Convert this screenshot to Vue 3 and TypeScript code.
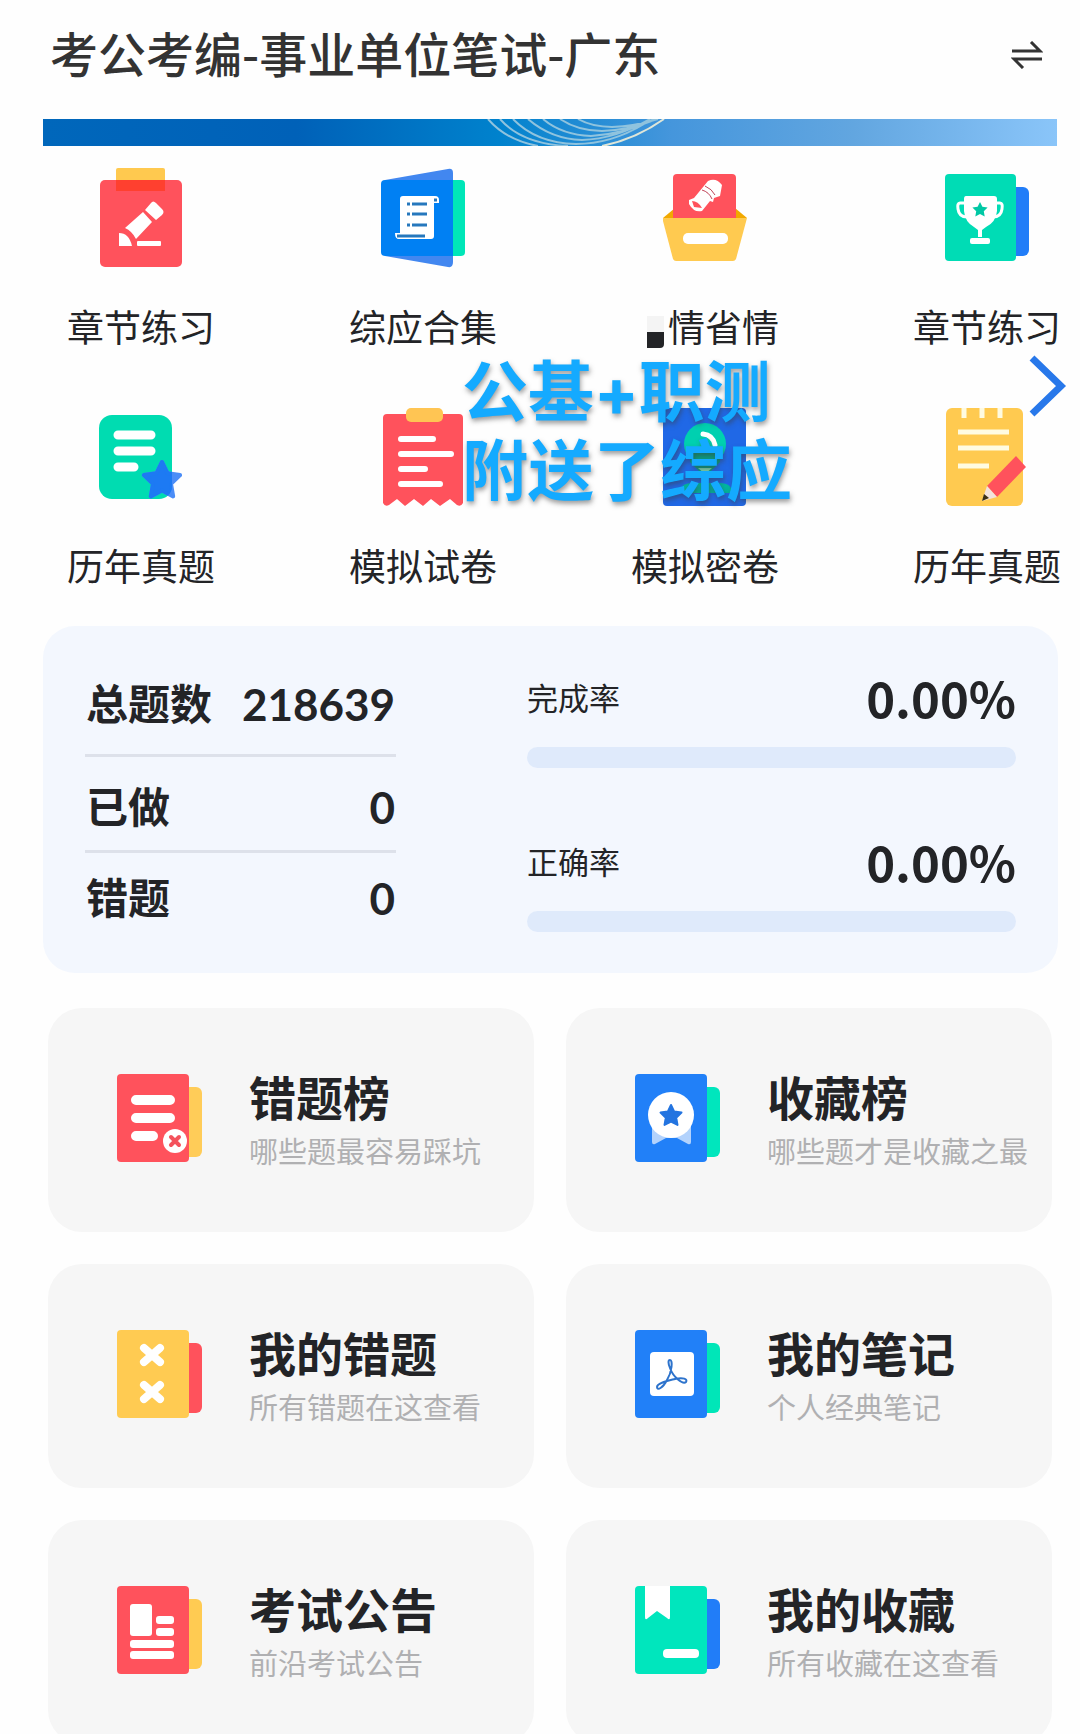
<script setup lang="ts">
interface Entry {
  label: string
  art: string
  masked?: boolean
}

interface Tile {
  title: string
  note: string
  art: string
}

const star = (cx: number, cy: number, r: number): string =>
  Array.from({ length: 10 }, (_, i) => {
    const radius = i % 2 ? r * 0.5 : r
    const a = -Math.PI / 2 + (i * Math.PI) / 5
    return `${(cx + radius * Math.cos(a)).toFixed(1)},${(cy + radius * Math.sin(a)).toFixed(1)}`
  }).join(' ')

// A cover sheet with a second, shorter sheet showing behind its right edge
const book = (front: string, back: string): string =>
  `<rect x="50" y="13" width="35" height="70" rx="6" fill="${back}"/><rect width="72" height="88" rx="4" fill="${front}"/>`

const entries: Entry[] = [
  {
    label: '章节练习',
    art: `<rect x="25" y="3" width="49" height="24" rx="2" fill="#ffc94f"/>
      <rect x="9" y="15" width="82" height="87" rx="5" fill="#ff525c"/>
      <path d="M25 15H74V26H25Z" fill="#ff402f"/>
      <path d="M54 45 60 38Q62 35 65 38L71 44Q74 47 71 50L65 55Z" fill="#fff"/>
      <path d="M52 47 61 57 45 74Q41 66 34 63Z" fill="#fff"/>
      <path d="M28 81V68Q38 68 41 81Z" fill="#fff"/>
      <rect x="46" y="76" width="24" height="5" rx="1" fill="#fff"/>`,
  },
  {
    label: '综应合集',
    art: `<rect x="60" y="15" width="32" height="76" rx="4" fill="#00e6b8"/>
      <path d="M12 15 75 4Q80 3 80 8V97Q80 103 75 102L12 91Z" fill="#4287f0"/>
      <path d="M12 15H80V91H12Q8 91 8 87V19Q8 15 12 15Z" fill="#0080f3"/>
      <path d="M30 31H62Q66 31 66 35V38H61V71Q61 74 58 74H26Q22 74 22 68H27V34Q27 31 30 31Z" fill="#fff"/>
      <path d="M39 39H54M39 49H54M39 60H54M34 39H37M34 49H37M34 60H37" stroke="#2678bd" stroke-width="3"/>
      <path d="M24 71H52M61 35H64" stroke="#2678bd" stroke-width="3"/>`,
  },
  {
    label: '情省情',
    masked: true,
    art: `<path d="M8 53 20 43H80L92 53Z" fill="#f2a900"/>
      <rect x="18" y="9" width="63" height="50" rx="4" fill="#ff525c"/>
      <path d="M8 53H92L81 94Q80 96 78 96H21Q19 96 18 94L8 56Z" fill="#ffca50"/>
      <rect x="28" y="68" width="45" height="11" rx="5" fill="#fff"/>
      <path d="M34 35 39 33 53 16Q61 12 67 20L65 31 59 33 58 37 55 36 47 46Q39 48 34 39Z" fill="#fff"/>
      <path d="M47 25Q54 27 57 34M50 21Q57 24 60 30" fill="none" stroke="#c1465a" stroke-width="1"/>
      <path d="M37 36Q43 36 47 43L39 42Z" fill="#ff525c"/>`,
  },
  {
    label: '章节练习',
    art: `<rect x="60" y="22" width="32" height="69" rx="6" fill="#217df8"/>
      <rect x="8" y="9" width="71" height="87" rx="4" fill="#00dcb5"/>
      <path d="M28 38H23Q20 38 21 44 22 52 30 52M58 38H63Q66 38 65 44 64 52 56 52" fill="none" stroke="#fff" stroke-width="3"/>
      <path d="M29 31H57Q60 31 60 34V46Q59 57 49 62L45 65V72H41V65L37 62Q28 57 27 46V34Q27 31 29 31Z" fill="#fff"/>
      <rect x="33" y="73" width="20" height="6" rx="2" fill="#fff"/>
      <polygon points="${star(43, 45, 8)}" fill="#00c8a5"/>`,
  },
  {
    label: '历年真题',
    art: `<rect x="8" y="11" width="73" height="84" rx="13" fill="#00dcb1"/>
      <path d="M27 31H60M27 47H60M27 63H43" stroke="#fff" stroke-width="9" stroke-linecap="round"/>
      <polygon points="${star(71, 77, 19)}" fill="#4b8df7" stroke="#4b8df7" stroke-width="4" stroke-linejoin="round"/>
      <clipPath id="star-on-sheet"><rect x="8" y="11" width="73" height="84" rx="13"/></clipPath>
      <polygon clip-path="url(#star-on-sheet)" points="${star(71, 77, 19)}" fill="#1d7af3" stroke="#1d7af3" stroke-width="4" stroke-linejoin="round"/>`,
  },
  {
    label: '模拟试卷',
    art: `<path d="M14 10H86Q90 10 90 14V99Q88 103 84 101L77 95 67 102 58 95 50 102 41 95 32 102 24 95 16 101Q12 103 10 99V14Q10 10 14 10Z" fill="#ff525c"/>
      <rect x="33" y="4" width="37" height="14" rx="5" fill="#ffc553"/>
      <path d="M28 35H60M28 50H78M28 65H52M28 80H67" stroke="#fff" stroke-width="6" stroke-linecap="round"/>`,
  },
  {
    label: '模拟密卷',
    art: `<rect x="8" y="4" width="83" height="98" rx="4" fill="#2068e6"/>
      <path d="M25 89Q25 79 37 79H65Q77 79 77 89Z" fill="#00b7a0"/>
      <circle cx="50" cy="40" r="21" fill="#00d0b0"/>
      <path d="M35 49H65V58L55 68H45L35 58Z" fill="#06a084"/>
      <path d="M43 64H57L50 70Z" fill="#7dd7b2"/>
      <path d="M48 30Q58 31 60 41" fill="none" stroke="#fff" stroke-width="5" stroke-linecap="round"/>`,
  },
  {
    label: '历年真题',
    art: `<rect x="9" y="4" width="77" height="98" rx="6" fill="#ffca50"/>
      <path d="M27 4V14M45 4V14M63 4V14M21 28H72M21 44H72M21 62H52" stroke="#fffbe0" stroke-width="5"/>
      <path d="M79 52 89 63 60 93 50 82Z" fill="#ff525c"/>
      <path d="M50 82 60 93 45 97Z" fill="#f3e3dc"/>
      <path d="M47 90 52 94 45 97Z" fill="#3c3015"/>`,
  },
]

const tiles: Tile[] = [
  {
    title: '错题榜',
    note: '哪些题最容易踩坑',
    art: `${book('#ff525c', '#ffcc58')}
      <path d="M19 26H53M19 44H53M19 62H36" stroke="#fff" stroke-width="10" stroke-linecap="round"/>
      <circle cx="58" cy="67" r="12" fill="#fff"/>
      <path d="M54 63 62 71M62 63 54 71" stroke="#f4525c" stroke-width="4" stroke-linecap="round"/>`,
  },
  {
    title: '收藏榜',
    note: '哪些题才是收藏之最',
    art: `${book('#2180f8', '#00e6bd')}
      <path d="M17 52H56V68Q56 71 53 70L42 64H31L20 70Q17 71 17 68Z" fill="#b2d2fc"/>
      <circle cx="36" cy="41" r="23" fill="#fff"/>
      <polygon points="${star(36, 42, 11)}" fill="#2374e0" stroke="#2374e0" stroke-width="2" stroke-linejoin="round"/>`,
  },
  {
    title: '我的错题',
    note: '所有错题在这查看',
    art: `${book('#ffcb52', '#ff525c')}
      <path d="M27 18 43 32M43 18 27 32M27 55 43 69M43 55 27 69" stroke="#fff" stroke-width="8" stroke-linecap="round"/>`,
  },
  {
    title: '我的笔记',
    note: '个人经典笔记',
    art: `${book('#2180f8', '#00e6b8')}
      <rect x="15" y="22" width="44" height="44" rx="4" fill="#fff"/>
      <path d="M35 30C38 30 37 42 32 50 28 58 22 61 22 57 22 53 32 51 40 49 48 47 53 49 51 52 48 55 38 47 35 38 33 33 33 30 35 30Z" fill="none" stroke="#2d73cc" stroke-width="2"/>`,
  },
  {
    title: '考试公告',
    note: '前沿考试公告',
    art: `${book('#ff525c', '#ffcb52')}
      <g fill="#fff"><rect x="13" y="18" width="22" height="32" rx="3"/><rect x="39" y="30" width="18" height="8" rx="3"/>
      <rect x="39" y="42" width="18" height="8" rx="3"/><rect x="13" y="54" width="44" height="8" rx="3"/><rect x="13" y="65" width="44" height="8" rx="3"/></g>`,
  },
  {
    title: '我的收藏',
    note: '所有收藏在这查看',
    art: `${book('#00e6bd', '#217df8')}
      <path d="M10 0H35V31Q35 35 32 32L22 25 13 32Q10 35 10 31Z" fill="#fff"/>
      <rect x="28" y="63" width="36" height="9" rx="4" fill="#fff"/>`,
  },
]

const totals = [
  { name: '总题数', value: '218639' },
  { name: '已做', value: '0' },
  { name: '错题', value: '0' },
]

const rates = [
  { id: 'rate-done', name: '完成率', value: 0 },
  { id: 'rate-right', name: '正确率', value: 0 },
]
</script>

<template>
  <main class="page">
    <header class="top">
      <h1>考公考编-事业单位笔试-广东</h1>
      <button class="swap" type="button" aria-label="切换">
        <svg width="32" height="28" viewBox="0 0 32 28" fill="none" stroke="#333" stroke-width="3">
          <path d="M1 10H29L20 1M31 18H3L12 27" />
        </svg>
      </button>
    </header>

    <div class="banner">
      <svg width="190" height="27" viewBox="0 0 190 27" fill="none" stroke-width="2">
        <g stroke="#8fc3de">
          <path d="M2 0Q20 21 52 27M14 0Q36 25 82 27M27 0Q50 24 90 25 125 25 158 5M42 0Q65 20 96 21 130 20 164 0M57 0Q76 16 105 17 138 15 168 0M74 0Q92 12 116 12 144 11 171 0M92 0Q106 8 126 8 150 7 172 0" />
        </g>
        <path d="M116 27Q150 20 178 0" stroke="#dfe6d8" />
      </svg>
    </div>

    <section class="entries">
      <button v-for="(entry, i) in entries" :key="i" type="button" class="entry">
        <svg width="100" height="110" viewBox="0 0 100 110" aria-hidden="true" v-html="entry.art" />
        <span class="entry-label"><i v-if="entry.masked" class="mask"></i>{{ entry.label }}</span>
      </button>
      <p class="promo">公基+职测<br />附送了综应</p>
      <button class="next" type="button" aria-label="下一页">
        <svg width="38" height="64" viewBox="0 0 38 64" fill="none" stroke="#2878ea" stroke-width="7">
          <path d="M3 4 32 32 3 60" />
        </svg>
      </button>
    </section>

    <section class="stats">
      <dl class="totals">
        <div v-for="row in totals" :key="row.name" class="total">
          <dt>{{ row.name }}</dt>
          <dd>{{ row.value }}</dd>
        </div>
      </dl>
      <div class="rates">
        <div v-for="rate in rates" :key="rate.id">
          <div class="rate-head">
            <label :for="rate.id">{{ rate.name }}</label>
            <strong>{{ rate.value.toFixed(2) }}%</strong>
          </div>
          <progress :id="rate.id" :value="rate.value" max="100"></progress>
        </div>
      </div>
    </section>

    <section class="tiles">
      <button v-for="tile in tiles" :key="tile.title" type="button" class="tile">
        <svg width="86" height="92" viewBox="0 0 86 92" aria-hidden="true" v-html="tile.art" />
        <span class="tile-text">
          <b>{{ tile.title }}</b>
          <small>{{ tile.note }}</small>
        </span>
      </button>
    </section>
  </main>
</template>

<style>
body {
  margin: 0;
  background: #fefefe;
}
</style>

<style scoped>
.page {
  height: 100vh;
  overflow-x: hidden;
  overflow-y: auto;
  scrollbar-width: none;
  color: #232427;
  font-family: 'Noto Sans CJK SC', sans-serif;
}

button {
  margin: 0;
  padding: 0;
  border: 0;
  background: none;
  color: inherit;
  font: inherit;
  cursor: pointer;
}

svg {
  display: block;
  flex: none;
}

.top {
  display: flex;
  align-items: center;
  justify-content: space-between;
  padding: 20px 37px 35px 50px;
}

h1 {
  margin: 0;
  color: #333;
  font-size: 48px;
  font-weight: 500;
  line-height: 64px;
  white-space: nowrap;
}

.swap {
  margin-top: 6px;
}

.banner {
  display: flex;
  height: 27px;
  margin: 0 23px 0 43px;
  padding-left: 41%;
  box-sizing: border-box;
  background: linear-gradient(90deg, #0067bb, #0061b8 25%, #0082cd 45%, #4596dc 62%, #62a6e0 80%, #8ac5f9);
}

.entries {
  position: relative;
  display: grid;
  grid-template-columns: repeat(4, 148px);
  justify-content: space-between;
  row-gap: 53px;
  padding: 19px 19px 0 67px;
}

.entry {
  display: flex;
  flex-direction: column;
  align-items: center;
  gap: 26px;
}

.entry-label {
  display: flex;
  font-size: 37px;
  line-height: 50px;
  white-space: nowrap;
}

.mask {
  width: 17px;
  height: 32px;
  margin: 15px 4px 0 16px;
  border-radius: 0 0 4px 0;
  background: linear-gradient(#f4f4f4 50%, #232427 50%);
}

.promo {
  position: absolute;
  top: 207px;
  left: 462px;
  margin: 0;
  color: #14aaff;
  font-family: Inter, 'Noto Sans CJK SC', sans-serif;
  font-size: 66px;
  font-weight: 700;
  line-height: 79px;
  text-shadow: 1px 3px 5px rgba(60, 60, 60, 0.5);
  white-space: nowrap;
  pointer-events: none;
}

.next {
  position: absolute;
  top: 208px;
  right: 13px;
}

.stats {
  display: grid;
  grid-template-columns: 311fr 489fr;
  column-gap: 131px;
  margin: 36px 22px 0 43px;
  padding: 43px 42px 40px;
  border-radius: 32px;
  background: #f3f7fe;
}

.totals {
  margin: 0;
  padding: 5px 0;
}

.total {
  display: flex;
  justify-content: space-between;
  padding: 15px 1px 0;
  font-size: 42px;
  font-weight: 700;
  line-height: 60px;
}

.total:first-child {
  padding: 0 1px 20px;
  border-bottom: 3px solid #dde1ea;
}

.total:nth-child(2) {
  padding: 20px 1px 13px;
  border-bottom: 3px solid #dde1ea;
}

dt,
label {
  line-height: 56px;
}

dd {
  margin: 0;
  font-family: Lato, 'Noto Sans CJK SC', sans-serif;
  font-size: 44px;
}

.rates {
  display: flex;
  flex-direction: column;
  gap: 65px;
}

.rate-head {
  display: flex;
  align-items: flex-start;
  justify-content: space-between;
  height: 60px;
  margin-bottom: 18px;
}

label {
  font-size: 31px;
}

strong {
  font-size: 49px;
  font-weight: 700;
  line-height: 56px;
}

progress {
  display: block;
  width: 100%;
  height: 21px;
  border: 0;
  border-radius: 11px;
  overflow: hidden;
  background: #dfeafb;
  appearance: none;
}

progress::-webkit-progress-bar {
  background: #dfeafb;
}

progress::-webkit-progress-value {
  background: #217df8;
}

.tiles {
  display: grid;
  grid-template-columns: repeat(2, minmax(0, 1fr));
  gap: 32px;
  padding: 35px 28px 32px 48px;
}

.tile {
  display: flex;
  align-items: center;
  gap: 46px;
  height: 224px;
  padding-left: 69px;
  border-radius: 34px;
  background: #f6f6f6;
  text-align: left;
  white-space: nowrap;
}

.tile-text {
  display: flex;
  flex-direction: column;
  gap: 4px;
  padding-bottom: 4px;
}

b {
  font-size: 47px;
  line-height: 60px;
}

small {
  color: #b0b0b2;
  font-size: 29px;
  line-height: 40px;
}
</style>
